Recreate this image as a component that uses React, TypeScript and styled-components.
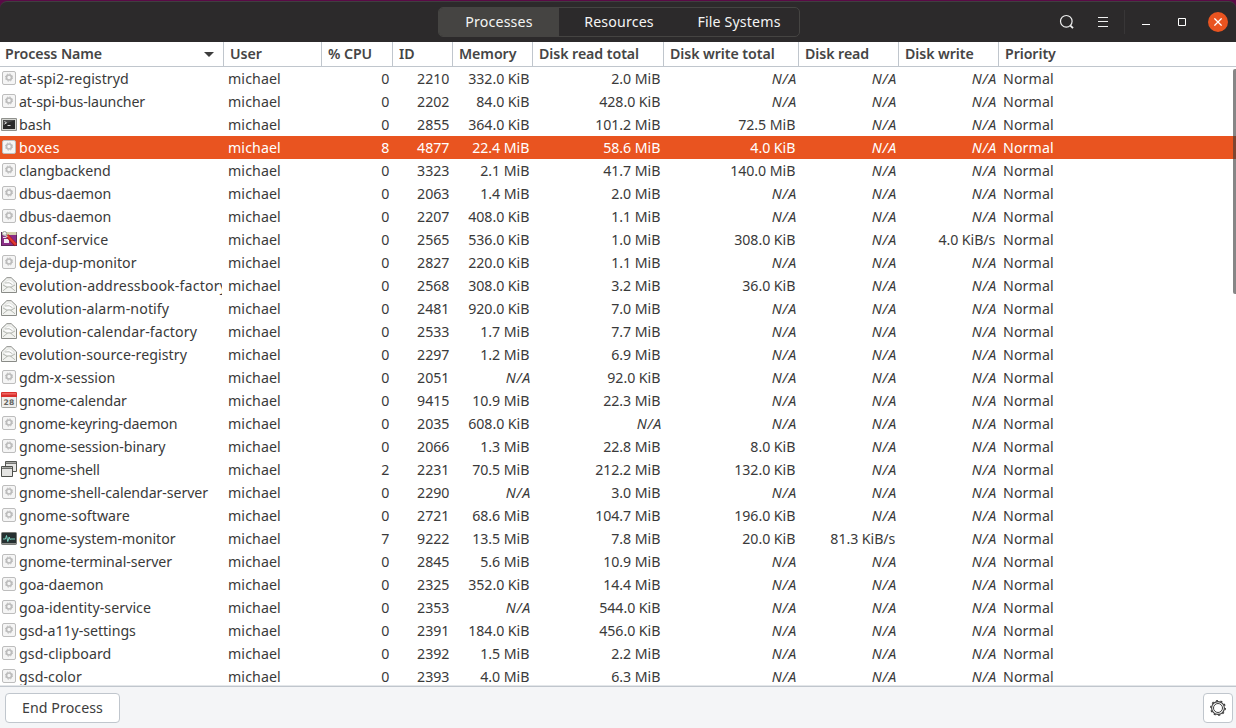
import React from "react";
import styled, { createGlobalStyle, css } from "styled-components";

const Global = createGlobalStyle`
  * { box-sizing: border-box; }
  body { margin: 0; background: #fff; overflow: hidden; }
`;

const Window = styled.div`
  width: 1236px;
  height: 728px;
  display: flex;
  flex-direction: column;
  font-family: "Noto Sans", "Open Sans", sans-serif;
  font-size: 14.2px;
  color: #3d3d3d;
  background: #5a0a46;
  overflow: hidden;
`;

const TitleBar = styled.header`
  margin-top: 1px;
  height: 41px;
  flex: none;
  display: grid;
  grid-template-columns: 438px 362px 1fr;
  align-items: center;
  background: #2c2a2b;
  border-top: 1px solid #403e40;
  border-radius: 7px 7px 0 0;
`;

const Switcher = styled.nav`
  grid-column: 2;
  height: 30px;
  display: grid;
  grid-template-columns: 120px 120px 120px;
  border: 1px solid #454442;
  border-radius: 5px;
  overflow: hidden;
  margin-top: -1px;
`;

const Tab = styled.button<{ $active?: boolean }>`
  border: 0;
  padding: 0;
  font: inherit;
  color: #f4f4f3;
  letter-spacing: 0.15px;
  line-height: 28px;
  background: ${(p) => (p.$active ? "#454442" : "transparent")};
`;

const Controls = styled.div`
  display: flex;
  justify-content: flex-end;
  align-items: center;
  padding-right: 8px;
  margin-top: -1px;
`;

const Control = styled.button<{ $w: number }>`
  width: ${(p) => p.$w}px;
  height: 30px;
  border: 0;
  padding: 0;
  background: none;
  display: flex;
  align-items: center;
  justify-content: center;
`;

const Divider = styled.span`
  width: 1px;
  height: 24px;
  margin: 0 12px 0 3px;
  background: #383637;
`;

const CloseButton = styled.button`
  width: 20px;
  height: 20px;
  margin-left: 0;
  border: 0;
  padding: 0;
  border-radius: 50%;
  background: #e95420;
  display: flex;
  align-items: center;
  justify-content: center;
`;

const columns = css`
  display: grid;
  grid-template-columns: 224px 98px 71px 60px 80px 131px 135px 100px 100px 1fr;
`;

const Head = styled.div`
  ${columns}
  height: 25px;
  flex: none;
  background: #fff;
  border-bottom: 1px solid #c0c6cd;
`;

const HeadCell = styled.div<{ $first?: boolean; $last?: boolean }>`
  display: flex;
  align-items: center;
  justify-content: space-between;
  padding: 0 9px 0 ${(p) => (p.$first ? 5 : 6)}px;
  border-right: ${(p) => (p.$last ? "0" : "1px solid #c0c6cd")};
  font-weight: 600;
  letter-spacing: -0.07px;
  line-height: 24px;
  white-space: nowrap;
  color: #454545;
`;

const List = styled.main`
  flex: none;
  height: 618px;
  overflow: hidden;
  background: #fff;
  position: relative;
`;

const ProcessRow = styled.div<{ $selected?: boolean }>`
  ${columns}
  height: 23px;
  line-height: 23px;
  color: ${(p) => (p.$selected ? "#fff" : "#3a3a3a")};
  background: ${(p) => (p.$selected ? "#e95420" : "#fff")};
`;

const Name = styled.div<{ $spacing: number }>`
  display: flex;
  align-items: flex-start;
  margin-right: 2px;
  padding-left: 1px;
  gap: 2px;
  overflow: hidden;
  white-space: nowrap;
  letter-spacing: ${(p) => p.$spacing}px;
  svg { flex: none; margin-top: 3px; }
`;

const Text = styled.div`
  padding-left: 4px;
  letter-spacing: 0.1px;
`;

const Value = styled.div<{ $missing?: boolean }>`
  text-align: right;
  white-space: nowrap;
  padding-right: ${(p) => (p.$missing ? 2 : 3.7)}px;
  font-style: ${(p) => (p.$missing ? "italic" : "normal")};
  letter-spacing: ${(p) => (p.$missing ? 0.7 : -0.06)}px;
`;

const ScrollThumb = styled.div`
  position: absolute;
  right: 0;
  top: 2px;
  width: 3px;
  height: 225px;
  border-radius: 2px 0 0 2px;
  background: rgba(60, 60, 60, 0.62);
`;

const Footer = styled.footer`
  flex: 1;
  display: flex;
  justify-content: space-between;
  align-items: flex-start;
  padding: 6px 3px 0 5px;
  background: #f4f5f7;
  border-top: 1px solid #c0c6cd;
  box-shadow: 0 -1px 0 #e3e6e9;
  margin-top: 1px;
  position: relative;
`;

const Button = styled.button<{ $w: number }>`
  width: ${(p) => p.$w}px;
  height: 30px;
  padding: 0 0 2px;
  display: flex;
  align-items: center;
  justify-content: center;
  font: inherit;
  letter-spacing: 0.07px;
  color: #3d3d3d;
  background: #fff;
  border: 1px solid #c0c6cd;
  border-radius: 4px;
`;

const PropertiesButton = styled(Button)`
  padding: 0;
`;

type IconKind = "gear" | "term" | "dconf" | "mail" | "cal" | "shell" | "mon";

function AppIcon({ kind }: { kind: IconKind }) {
  const box = { width: 16, height: 16, viewBox: "0 0 16 16" };
  switch (kind) {
    case "term":
      return (
        <svg {...box}>
          <rect x="0" y="2" width="16" height="13" rx="1" fill="#8f918d" />
          <rect x="1" y="3" width="14" height="11" fill="#d3d4d0" />
          <rect x="2" y="4" width="12" height="9" fill="#2a2a2a" />
          <path d="M2 4h12L2 9z" fill="#484848" />
          <path d="M3.5 5.5l2 1.3-2 1.3M6.5 9.5h3" fill="none" stroke="#eee" strokeWidth=".9" />
        </svg>
      );
    case "dconf":
      return (
        <svg {...box}>
          <rect x=".5" y="1.5" width="15" height="13" fill="#8a2d87" stroke="#5b2658" />
          <path d="M1 1h14.5v3H1z" fill="#d3d2ad" />
          <path d="M3 8h5v4H3z" fill="#f4eef4" />
          <path d="M2 6.5h6" stroke="#e8d9e8" />
          <path d="M6 4.5l8.8 9.5" stroke="#a5191b" strokeWidth="3.6" />
          <path d="M6 4.2l9 9.5" stroke="#e23a33" strokeWidth="2.2" />
          <circle cx="3.6" cy="2.6" r="2.1" fill="#f3f3f1" stroke="#999b96" />
          <path d="M3.5 3.5l2.8 2.5" stroke="#c8c9c5" strokeWidth="1.5" />
        </svg>
      );
    case "mail":
      return (
        <svg {...box}>
          <path d="M.5 5.8L5.8.7h4.4l5.3 5.1v9.7H.5z" fill="#f2f3f0" stroke="#898b87" />
          <path d="M3 5.8l4-2.8h2l4 2.8v2.7L8 10 3 8.5z" fill="#fcfcfc" stroke="#d6d8d4" strokeWidth=".7" />
          <path d="M4 6q4.5-1.4 7.5 1.8M2 8l4.2 2.4L2 13.8M14 8l-4.2 2.4 4.2 3.4M5.5 10.5q2.5-1.4 5 0" fill="none" stroke="#b1b4af" strokeWidth=".9" />
        </svg>
      );
    case "cal":
      return (
        <svg {...box}>
          <rect x=".5" y=".5" width="15" height="15" rx="1" fill="#eeeeec" stroke="#a3a49f" />
          <path d="M0 1.2Q0 0 1.2 0h13.6Q16 0 16 1.2V5H0z" fill="#d92f2c" />
          <path d="M1 1h14v1.6H1z" fill="#ee6661" />
          <text x="8.1" y="12.9" textAnchor="middle" fontFamily="DejaVu Sans" fontWeight="bold" fontSize="7.6" letterSpacing=".2" fill="#62645f">28</text>
        </svg>
      );
    case "shell":
      return (
        <svg {...box}>
          <path d="M4.5.5h11v10h-11z" fill="#e6e6e4" stroke="#555753" />
          <path d="M5 1.5h10" stroke="#a5a6a3" />
          <path d="M4 2.5h12" stroke="#555753" strokeWidth=".8" />
          <path d="M.5 5.5h11v10H.5z" fill="#e4e4e2" stroke="#4d4f4b" />
          <path d="M1.5 6.5h9" stroke="#a5a6a3" />
          <path d="M0 7.5h12" stroke="#4d4f4b" strokeWidth=".8" />
        </svg>
      );
    case "mon":
      return (
        <svg {...box}>
          <rect x=".5" y="2.5" width="15" height="12" rx="1" fill="#263031" stroke="#777975" />
          <path d="M1 13.5h14" stroke="#8c8e8a" />
          <path d="M2 9h2.5l1-3.5 1.3 6L8.2 7l.8 2.5.8-.5H14" fill="none" stroke="#7fe0cd" strokeWidth=".9" />
        </svg>
      );
    default:
      return (
        <svg {...box}>
          <rect x="1.5" y="1.5" width="13" height="13" rx="1.5" fill="#f5f5f5" stroke="#bdbdbd" />
          <circle cx="8" cy="7.5" r="2.5" fill="none" stroke="#bcbcbc" strokeWidth="1.6" />
          <circle cx="8" cy="7.5" r="3.6" fill="none" stroke="#b8b8b8" strokeWidth="1" strokeDasharray="1.42 1.41" />
        </svg>
      );
  }
}

type Process = {
  name: string;
  cpu: number;
  id: number;
  mem: string;
  rt: string;
  wt: string;
  r?: string;
  w?: string;
  icon?: IconKind;
  sp?: number;
};

const NA = "N/A";
const p = (name: string, cpu: number, id: number, mem: string, rt: string, wt: string, extra: Partial<Process> = {}): Process => ({
  name, cpu, id, mem, rt, wt, ...extra,
});

const processes: Process[] = [
  p("at-spi2-registryd", 0, 2210, "332.0 KiB", "2.0 MiB", NA, { sp: 0.03 }),
  p("at-spi-bus-launcher", 0, 2202, "84.0 KiB", "428.0 KiB", NA, { sp: -0.15 }),
  p("bash", 0, 2855, "364.0 KiB", "101.2 MiB", "72.5 MiB", { icon: "term" }),
  p("boxes", 8, 4877, "22.4 MiB", "58.6 MiB", "4.0 KiB", { sp: 0.35 }),
  p("clangbackend", 0, 3323, "2.1 MiB", "41.7 MiB", "140.0 MiB", { sp: -0.07 }),
  p("dbus-daemon", 0, 2063, "1.4 MiB", "2.0 MiB", NA, { sp: -0.05 }),
  p("dbus-daemon", 0, 2207, "408.0 KiB", "1.1 MiB", NA, { sp: -0.05 }),
  p("dconf-service", 0, 2565, "536.0 KiB", "1.0 MiB", "308.0 KiB", { w: "4.0 KiB/s", icon: "dconf", sp: 0.04 }),
  p("deja-dup-monitor", 0, 2827, "220.0 KiB", "1.1 MiB", NA),
  p("evolution-addressbook-factory", 0, 2568, "308.0 KiB", "3.2 MiB", "36.0 KiB", { icon: "mail", sp: 0.15 }),
  p("evolution-alarm-notify", 0, 2481, "920.0 KiB", "7.0 MiB", NA, { icon: "mail", sp: 0.09 }),
  p("evolution-calendar-factory", 0, 2533, "1.7 MiB", "7.7 MiB", NA, { icon: "mail", sp: 0.1 }),
  p("evolution-source-registry", 0, 2297, "1.2 MiB", "6.9 MiB", NA, { icon: "mail", sp: 0.05 }),
  p("gdm-x-session", 0, 2051, NA, "92.0 KiB", NA, { sp: -0.04 }),
  p("gnome-calendar", 0, 9415, "10.9 MiB", "22.3 MiB", NA, { icon: "cal", sp: -0.14 }),
  p("gnome-keyring-daemon", 0, 2035, "608.0 KiB", NA, NA, { sp: -0.15 }),
  p("gnome-session-binary", 0, 2066, "1.3 MiB", "22.8 MiB", "8.0 KiB", { sp: -0.08 }),
  p("gnome-shell", 2, 2231, "70.5 MiB", "212.2 MiB", "132.0 KiB", { icon: "shell", sp: -0.18 }),
  p("gnome-shell-calendar-server", 0, 2290, NA, "3.0 MiB", NA, { sp: -0.09 }),
  p("gnome-software", 0, 2721, "68.6 MiB", "104.7 MiB", "196.0 KiB", { sp: 0.06 }),
  p("gnome-system-monitor", 7, 9222, "13.5 MiB", "7.8 MiB", "20.0 KiB", { r: "81.3 KiB/s", icon: "mon", sp: -0.05 }),
  p("gnome-terminal-server", 0, 2845, "5.6 MiB", "10.9 MiB", NA, { sp: -0.07 }),
  p("goa-daemon", 0, 2325, "352.0 KiB", "14.4 MiB", NA, { sp: -0.06 }),
  p("goa-identity-service", 0, 2353, NA, "544.0 KiB", NA, { sp: 0.05 }),
  p("gsd-a11y-settings", 0, 2391, "184.0 KiB", "456.0 KiB", NA, { sp: -0.06 }),
  p("gsd-clipboard", 0, 2392, "1.5 MiB", "2.2 MiB", NA, { sp: 0.09 }),
  p("gsd-color", 0, 2393, "4.0 MiB", "6.3 MiB", NA, { sp: 0.06 }),
];

const headings = ["Process Name", "User", "% CPU", "ID", "Memory", "Disk read total", "Disk write total", "Disk read", "Disk write", "Priority"];

const Cell = ({ v }: { v: string | number }) => <Value $missing={v === NA}>{v}</Value>;

export default function App() {
  return (
    <Window>
      <Global />
      <TitleBar>
        <Switcher>
          <Tab $active>Processes</Tab>
          <Tab>Resources</Tab>
          <Tab>File Systems</Tab>
        </Switcher>
        <Controls>
          <Control $w={36} aria-label="Search">
            <svg width="16" height="16" viewBox="0 0 16 16" fill="none" stroke="#f0f0f0">
              <circle cx="7.3" cy="7.3" r="5.8" strokeWidth="1.2" />
              <path d="M11.4 11.6l2.6 2.6" strokeWidth="1.8" />
            </svg>
          </Control>
          <Control $w={36} aria-label="Menu">
            <svg width="12" height="12" viewBox="0 0 12 12" stroke="#f0f0f0">
              <path d="M1 1.5h10M1 5.5h10M1 10.5h10" />
            </svg>
          </Control>
          <Divider />
          <Control $w={18} aria-label="Minimize">
            <svg width="10" height="10" viewBox="0 0 10 10"><path d="M1 7.5h8" stroke="#fff" /></svg>
          </Control>
          <Control $w={53} aria-label="Maximize">
            <svg width="10" height="10" viewBox="0 0 10 10"><path d="M1.5 1.5h7v7h-7z" fill="none" stroke="#fff" /></svg>
          </Control>
          <CloseButton aria-label="Close">
            <svg width="8" height="8" viewBox="0 0 8 8"><path d="M.4.4l7.2 7.2M7.6.4L.4 7.6" stroke="#fff" strokeWidth="1.3" /></svg>
          </CloseButton>
        </Controls>
      </TitleBar>
      <Head>
        {headings.map((h, i) => (
          <HeadCell key={h} $first={i === 0} $last={i === 9}>
            {h}
            {i === 0 && (
              <svg width="10" height="5" viewBox="0 0 10 5"><path d="M0 0h10L5 5z" fill="#3d3d3d" /></svg>
            )}
          </HeadCell>
        ))}
      </Head>
      <List>
        {processes.map((x) => (
          <ProcessRow key={x.id} $selected={x.name === "boxes"}>
            <Name $spacing={x.sp ?? 0}>
              <AppIcon kind={x.icon ?? "gear"} />
              <span>{x.name}</span>
            </Name>
            <Text>michael</Text>
            <Cell v={x.cpu} />
            <Cell v={x.id} />
            <Cell v={x.mem} />
            <Cell v={x.rt} />
            <Cell v={x.wt} />
            <Cell v={x.r ?? NA} />
            <Cell v={x.w ?? NA} />
            <Text>Normal</Text>
          </ProcessRow>
        ))}
        <ScrollThumb />
      </List>
      <Footer>
        <Button $w={115}>End Process</Button>
        <PropertiesButton $w={30} aria-label="Process properties">
          <svg width="16" height="16" viewBox="0 0 16 16" fill="none" stroke="#3d3d3d">
            <circle cx="8" cy="8" r="4.5" />
            <circle cx="8" cy="8" r="6.4" strokeWidth="1.1" />
            <circle cx="8" cy="8" r="7.3" strokeWidth="1.3" strokeDasharray="2 2.59" />
          </svg>
        </PropertiesButton>
      </Footer>
    </Window>
  );
}
